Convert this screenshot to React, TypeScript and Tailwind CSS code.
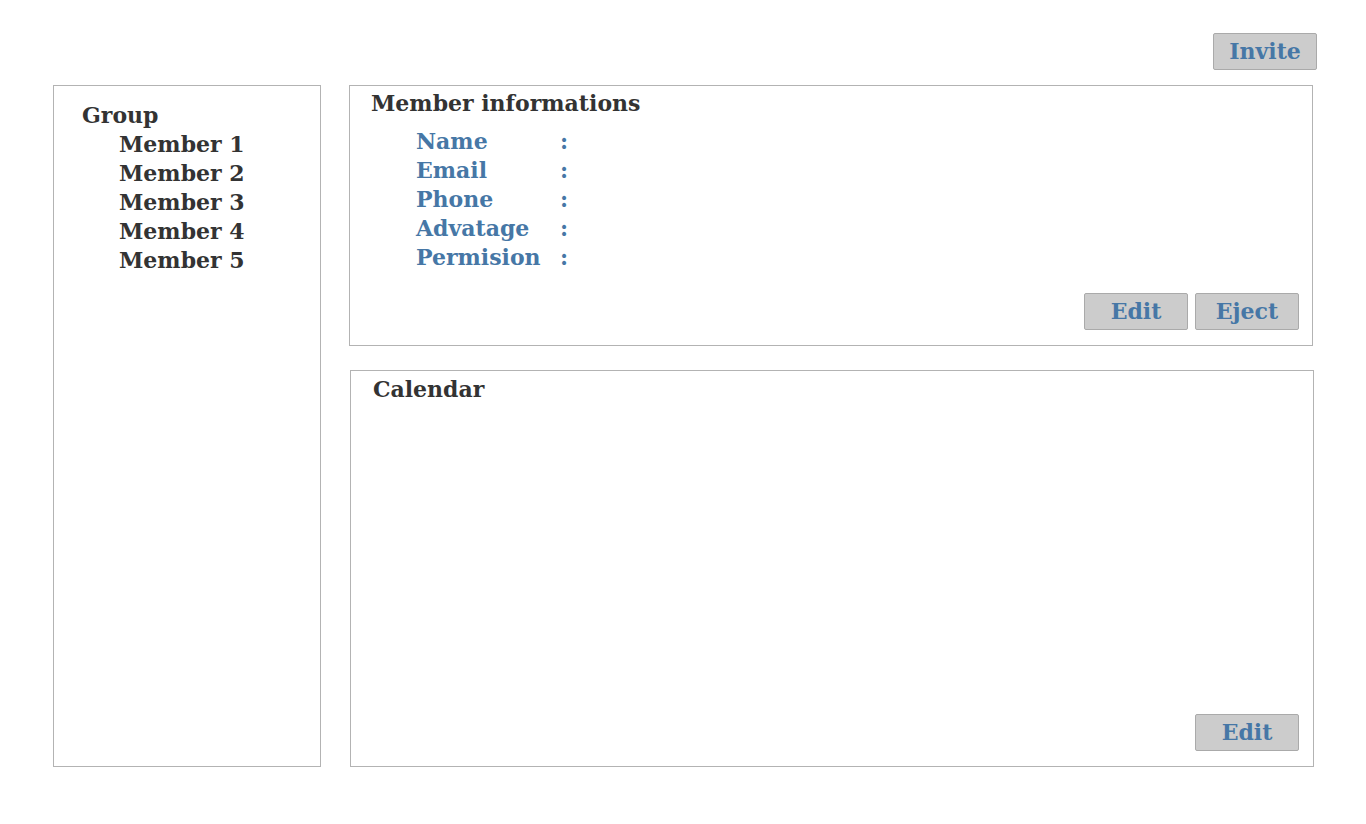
const members = ["Member 1", "Member 2", "Member 3", "Member 4", "Member 5"];
const fields = ["Name", "Email", "Phone", "Advatage", "Permision"];

const font = "font-['DejaVu_Serif','Liberation_Serif',serif]";

function Btn({ label }: { label: string }) {
  return (
    <button className={`w-[104px] h-[37px] pb-[2px] bg-[#cccccc] border border-[#aaaaaa] rounded-[2px] text-[#4677a6] text-[22px] font-bold leading-none ${font}`}>
      {label}
    </button>
  );
}

export default function App() {
  return (
    <div className={`w-[1366px] h-[824px] bg-white pt-[33px] ${font}`}>
      <div className="flex justify-end pr-[49px]">
        <Btn label="Invite" />
      </div>

      <div className="flex mt-[15px] pl-[53px] gap-[28px]">
        {/* Group list */}
        <div className="w-[268px] h-[682px] shrink-0 border border-[#b3b3b3] pt-[15px] pl-[28px] text-[#333333] text-[22px] font-bold leading-[29px]">
          <div>Group</div>
          <div className="pl-[37px]">
            {members.map((m) => (
              <div key={m}>{m}</div>
            ))}
          </div>
        </div>

        <div className="flex flex-col gap-[24px] w-[965px]">
          {/* Member info */}
          <div className="w-[964px] h-[261px] border border-[#b3b3b3] flex flex-col pt-[3px] pl-[21px] pr-[13px] pb-[15px]">
            <div className="text-[#333333] text-[22px] font-bold leading-[29px]">Member informations</div>
            <div className="mt-[9px] pl-[45px] text-[#4677a6] text-[22px] font-bold leading-[29px]">
              {fields.map((f) => (
                <div key={f} className="flex">
                  <span className="w-[144px]">{f}</span>
                  <span>:</span>
                </div>
              ))}
            </div>
            <div className="mt-auto flex justify-end gap-[7px]">
              <Btn label="Edit" />
              <Btn label="Eject" />
            </div>
          </div>

          {/* Calendar */}
          <div className="ml-px w-[964px] h-[397px] border border-[#b3b3b3] flex flex-col pt-[4px] pl-[22px] pr-[14px] pb-[15px]">
            <div className="text-[#333333] text-[22px] font-bold leading-[29px]">Calendar</div>
            <div className="mt-auto flex justify-end">
              <Btn label="Edit" />
            </div>
          </div>
        </div>
      </div>
    </div>
  );
}
